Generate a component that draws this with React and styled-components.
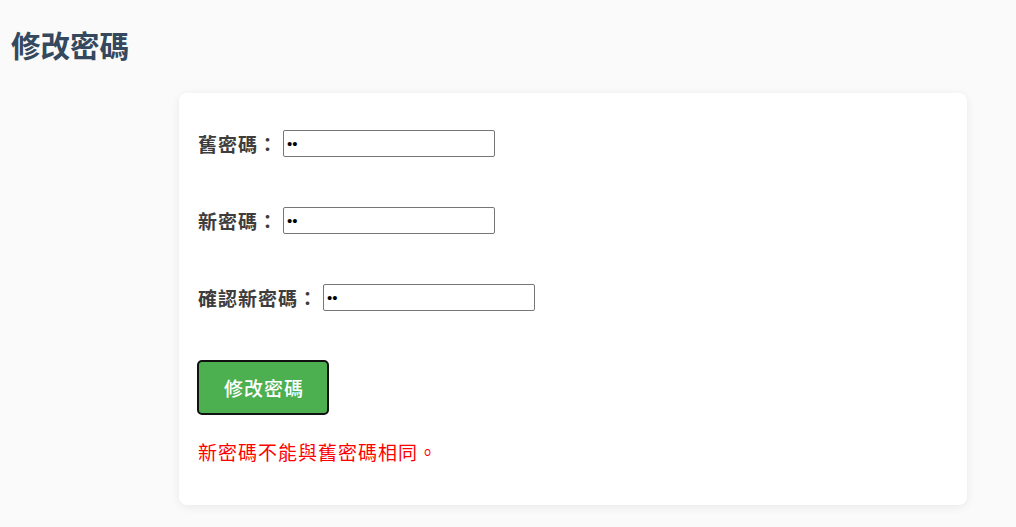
import React from 'react';
import styled, { createGlobalStyle } from 'styled-components';

const GlobalStyle = createGlobalStyle`
	html, body {
		margin: 0;
		padding: 0;
		background: #fafafa;
		font-family: "Noto Sans CJK TC", "Noto Sans", sans-serif;
	}
`;

const Page = styled.div`
	width: 1016px;
	min-height: 527px;
	box-sizing: border-box;
	padding: 24px 49px 0 11px;
`;

const Title = styled.h1`
	margin: 0;
	font-size: 29.5px;
	line-height: 40px;
	font-weight: 700;
	color: #34495e;
`;

const Card = styled.div`
	margin: 29px 0 0 168px;
	background: #fff;
	border-radius: 8px;
	box-shadow: 0 2px 10px rgba(0, 0, 0, 0.07);
	padding: 37px 18px 40px;
	display: flex;
	flex-direction: column;
	align-items: flex-start;
`;

const Row = styled.div`
	display: flex;
	align-items: center;
	height: 27px;
	margin-bottom: 50px;
	&:nth-of-type(3) {
		margin-bottom: 49px;
	}
`;

const Label = styled.label`
	font-size: 19px;
	letter-spacing: 1px;
	line-height: 27px;
	font-weight: 700;
	color: #3d3d3d;
	padding-left: 1px;
	margin-right: 5px;
`;

const Input = styled.input`
	width: 212px;
	height: 27px;
	box-sizing: border-box;
	border: 1px solid #767676;
	border-radius: 2px;
	padding: 1px 3px;
	font-size: 15px;
	font-family: "Liberation Sans", sans-serif;
	background: #fff;
	color: #000;
`;

const Button = styled.button`
	font-family: "Noto Sans CJK TC", "Noto Sans", sans-serif;
	font-size: 19px;
	letter-spacing: 1px;
	line-height: 27px;
	font-weight: 500;
	color: #fff;
	background: #4caf50;
	border: 2px solid #111;
	border-radius: 5px;
	padding: 12px 23px 12px 25px;
	cursor: pointer;
`;

const Message = styled.p`
	margin: 23px 0 0;
	padding-left: 1px;
	font-size: 19px;
	letter-spacing: 1px;
	line-height: 27px;
	color: #ff0000;
`;

const fields = [
	{ id: 'old', label: '舊密碼：' },
	{ id: 'new', label: '新密碼：' },
	{ id: 'confirm', label: '確認新密碼：' },
];

export default function App() {
	return (
		<>
			<GlobalStyle />
			<Page>
				<Title>修改密碼</Title>
				<Card>
					{fields.map(f => (
						<Row key={f.id}>
							<Label htmlFor={f.id}>{f.label}</Label>
							<Input id={f.id} type="password" defaultValue="12" />
						</Row>
					))}
					<Button>修改密碼</Button>
					<Message>新密碼不能與舊密碼相同。</Message>
				</Card>
			</Page>
		</>
	);
}
